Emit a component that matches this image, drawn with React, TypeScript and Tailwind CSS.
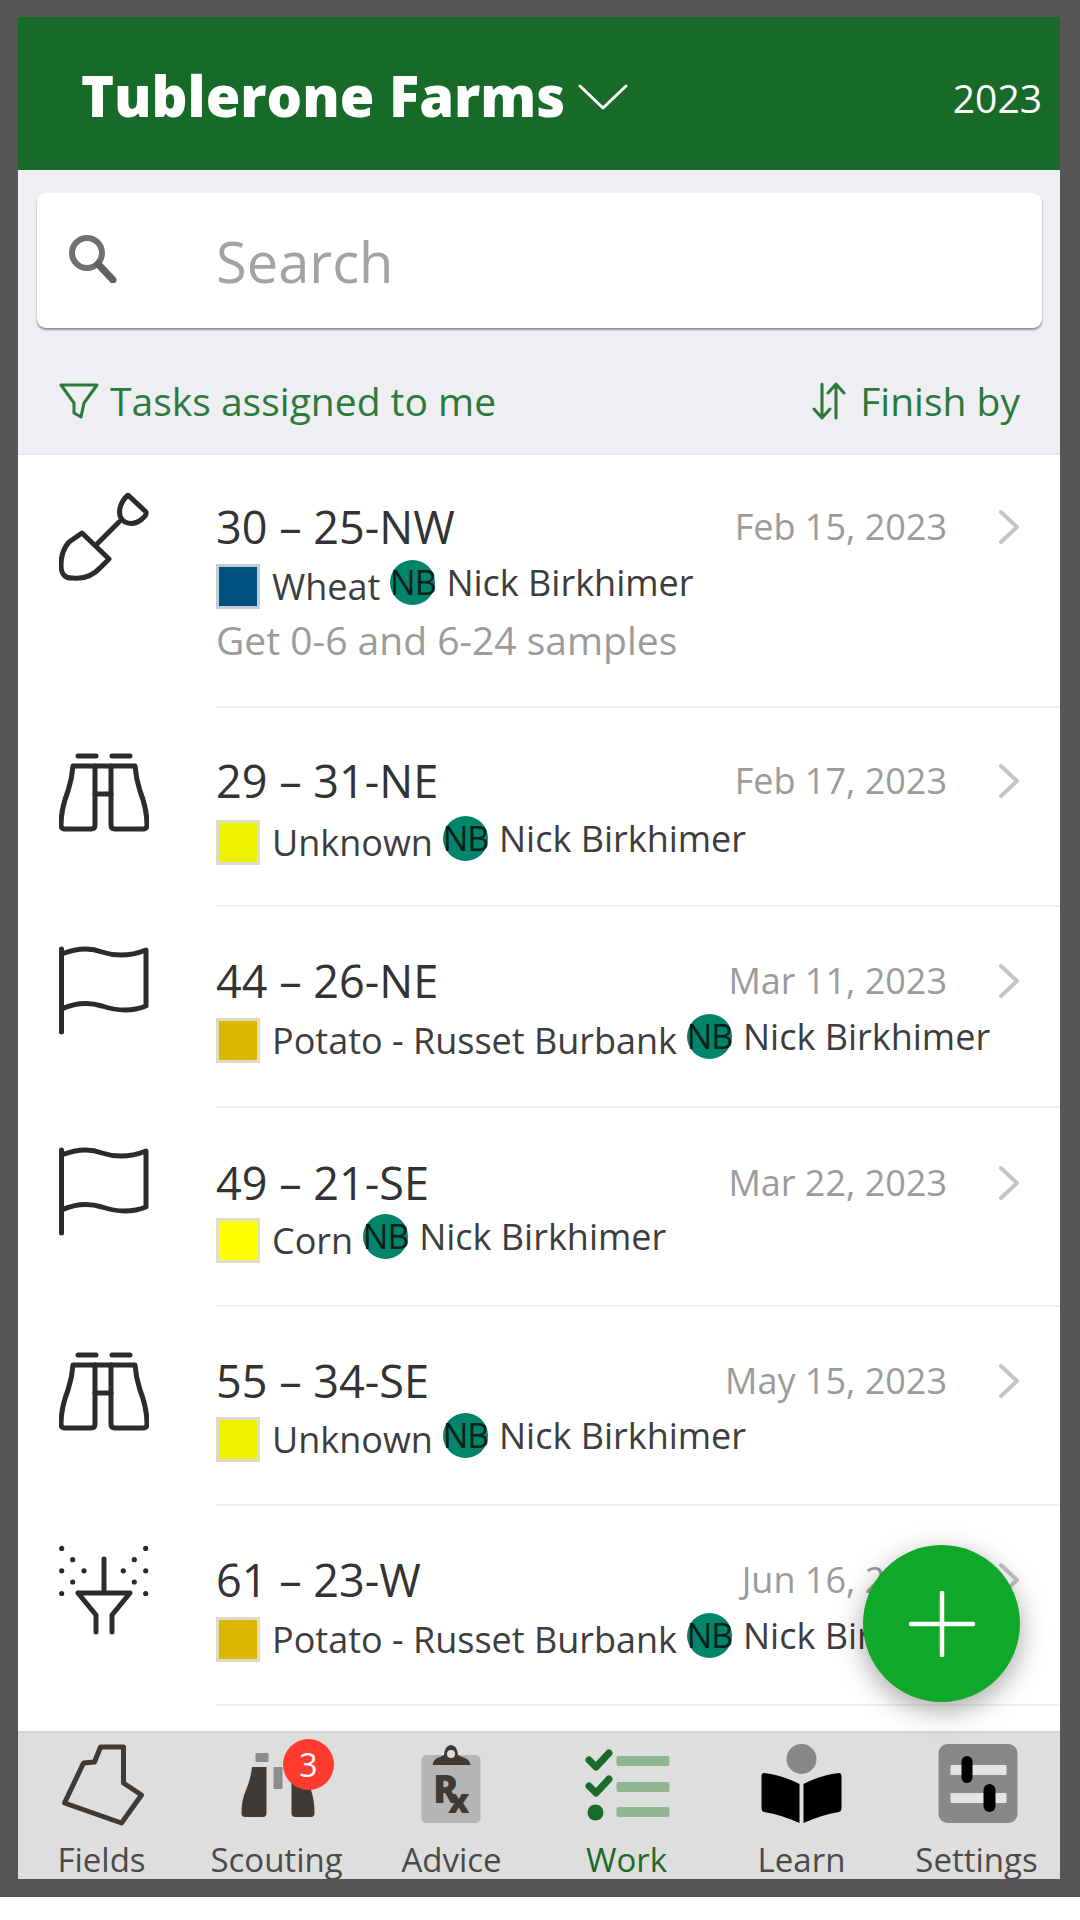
const FONT = "font-['Open_Sans',sans-serif]";

function Shovel() {
  return (
    <svg viewBox="0 0 90 90" className="w-[90px] h-[90px]" fill="none" stroke="#2b2b2b" strokeWidth="5" strokeLinecap="round" strokeLinejoin="round">
      <path d="M69 2 L87 19 Q88 22 83 26 Q75 33 66 29 Q59 25 61 15 Q63 7 69 2 Z" />
      <path d="M60 29 L37 52" />
      <path d="M23 40 L50 66 L42 74 Q30 87 14 85 Q2 86 2 72 Q2 58 10 49 Z" />
    </svg>
  );
}
function Binoculars() {
  return (
    <svg viewBox="0 0 90 80" className="w-[90px] h-[80px]" fill="none" stroke="#2b2b2b" strokeWidth="5" strokeLinecap="round" strokeLinejoin="round">
      <path d="M19 3 H37 M53 3 H71" />
      <path d="M14 13 H36 V72 Q36 76 32 76 H6 Q2 76 2 72 Q2 56 9 38 Q13 26 14 13 Z" />
      <path d="M76 13 H52 V72 Q52 76 56 76 H84 Q88 76 88 72 Q88 56 81 38 Q77 26 76 13 Z" />
      <path d="M36 13 H52 M36 41 H52" />
    </svg>
  );
}
function Flag() {
  return (
    <svg viewBox="0 0 90 90" className="w-[90px] h-[90px]" fill="none" stroke="#2b2b2b" strokeWidth="5" strokeLinecap="round" strokeLinejoin="round">
      <path d="M2.5 3 V86" />
      <path d="M2.5 8 C18 2 30 1 43 6 C58 11 72 10 87 4 V60 C72 66 58 65 43 60 C30 56 18 56 2.5 63" />
    </svg>
  );
}
function Sprayer() {
  const pts = [[2.7,3.4],[13.7,14.7],[2.7,25.8],[25,25.8],[13.7,37],[2.7,48.5],[86.7,3.4],[75.3,14.7],[86.7,25.8],[64.3,25.8],[75.3,37],[86.7,48.5]];
  return (
    <svg viewBox="0 0 90 90" className="w-[90px] h-[90px]" fill="none" stroke="#2b2b2b" strokeWidth="5" strokeLinecap="round" strokeLinejoin="round">
      {pts.map((p, i) => <circle key={i} cx={p[0]} cy={p[1]} r="1.8" strokeWidth="1.6" fill="#2b2b2b" />)}
      <path d="M45 14 V47" />
      <path d="M19 48 H71 L53 70 V87 M37 87 V70 L19 48" />
    </svg>
  );
}

type Row = { h: number; pt: number; gap: number; icon: JSX.Element; iconTop: number; title: string; date: string; color: string; edge: string; crop: string; note?: string };

const rows: Row[] = [
  { h: 253, pt: 47, gap: 12, icon: <Shovel />, iconTop: 38, title: "30 – 25-NW", date: "Feb 15, 2023", color: "#00507f", edge: "#bfcfda", crop: "Wheat", note: "Get 0-6 and 6-24 samples" },
  { h: 199, pt: 48, gap: 14, icon: <Binoculars />, iconTop: 45, title: "29 – 31-NE", date: "Feb 17, 2023", color: "#eef200", edge: "#dcdcc8", crop: "Unknown" },
  { h: 201, pt: 49, gap: 12, icon: <Flag />, iconTop: 39, title: "44 – 26-NE", date: "Mar 11, 2023", color: "#dcb600", edge: "#e0dcc4", crop: "Potato - Russet Burbank" },
  { h: 199, pt: 50, gap: 10, icon: <Flag />, iconTop: 39, title: "49 – 21-SE", date: "Mar 22, 2023", color: "#ffff00", edge: "#e0e0c8", crop: "Corn" },
  { h: 199, pt: 49, gap: 11, icon: <Binoculars />, iconTop: 45, title: "55 – 34-SE", date: "May 15, 2023", color: "#eef200", edge: "#dcdcc8", crop: "Unknown" },
  { h: 200, pt: 49, gap: 12, icon: <Sprayer />, iconTop: 39, title: "61 – 23-W", date: "Jun 16, 2023", color: "#dcb600", edge: "#e0dcc4", crop: "Potato - Russet Burbank" },
];

function TaskRow({ r }: { r: Row }) {
  return (
    <div className="flex shrink-0" style={{ height: r.h }}>
      <div className="w-[198px] shrink-0 pl-[41px]" style={{ paddingTop: r.iconTop }}>{r.icon}</div>
      <div className="flex-1 min-w-0 border-b-2 border-[#f0f0f0] pr-[40px]" style={{ paddingTop: r.pt }}>
        <div className="flex items-center justify-between h-[50px]">
          <span className="text-[45px] leading-[50px] text-[#333333]">{r.title}</span>
          <div className="flex items-center">
            <span className="text-[36px] text-[#9b9b9b] whitespace-nowrap">{r.date}</span>
            <svg viewBox="0 0 22 36" className="w-[22px] h-[36px] ml-[51px]" fill="none" stroke="#c4c4c4" strokeWidth="4" strokeLinecap="round" strokeLinejoin="round">
              <path d="M3 3 L19 18 L3 33" />
            </svg>
          </div>
        </div>
        <div className="flex items-start whitespace-nowrap" style={{ marginTop: r.gap }}>
          <div className="w-[44px] h-[45px] border-[3px] shrink-0" style={{ backgroundColor: r.color, borderColor: r.edge }} />
          <span className="text-[36px] leading-[46px] text-[#3d3d3d] ml-[12px]">{r.crop}</span>
          <div className="w-[45px] h-[45px] rounded-full bg-[#00856a] shrink-0 ml-[10px] -mt-[4px] flex items-center justify-center text-[34px] tracking-[-1px] leading-[45px] text-[#0a1f1a]">NB</div>
          <span className="text-[36px] leading-[38px] text-[#3d3d3d] ml-[11px]">Nick Birkhimer</span>
        </div>
        {r.note && <div className="text-[39px] leading-[46px] text-[#9b9b9b] mt-[7px]">{r.note}</div>}
      </div>
    </div>
  );
}

function TabIcon({ children }: { children: React.ReactNode }) {
  return <svg viewBox="0 0 100 86" className="w-[100px] h-[86px]">{children}</svg>;
}

const tabs = [
  { label: "Fields", color: "#4a4a4a", icon: <polygon points="48.5,7 71.5,7 71.5,43 89.5,55 69.5,83 12.5,63 31.5,23 42.5,22" fill="#dedede" stroke="#3f3a35" strokeWidth="5" strokeLinejoin="round" /> },
  { label: "Scouting", color: "#4a4a4a", icon: (
    <g>
      <rect x="28.5" y="13" width="13" height="9" rx="1" fill="#8c8c8c" />
      <rect x="46.5" y="27" width="9" height="22" fill="#8c8c8c" />
      <path d="M25 27 H39.5 V73 Q39.5 77 36 77 H18 Q14.5 77 14.5 73 Q14.5 60 19 50 Q24 38 25 27 Z" fill="#3f3a35" />
      <path d="M64.5 27 H77 Q79 38 84 50 Q87.5 60 87.5 73 Q87.5 77 84 77 H68 Q64.5 77 64.5 73 Z" fill="#3f3a35" />
    </g>
  ) },
  { label: "Advice", color: "#4a4a4a", icon: (
    <g>
      <rect x="19.5" y="15" width="59" height="68" rx="5" fill="#b5b5b5" />
      <path d="M30.5 25 Q31 19 38 17 L42 15 Q43 5 49 5 Q55 5 56 15 L60 17 Q68 19 68.5 25 Z" fill="#3f3a35" />
      <circle cx="49" cy="14" r="4" fill="#dedede" />
      <text x="31" y="63" fontSize="38" fontWeight="800" fill="#3f3a35" fontFamily="Open Sans, sans-serif">R</text>
      <text x="46" y="73" fontSize="34" fontWeight="800" fill="#3f3a35" fontFamily="Open Sans, sans-serif">x</text>
    </g>
  ) },
  { label: "Work", color: "#1a6b2a", icon: (
    <g>
      <path d="M12 20 L19 27 L32 13 M12 46 L19 53 L32 39" fill="none" stroke="#1a6b2a" strokeWidth="7" strokeLinecap="round" strokeLinejoin="round" />
      <circle cx="18.5" cy="72.5" r="8" fill="#1a6b2a" />
      <rect x="39.5" y="16" width="53" height="10" rx="2" fill="#8fb592" />
      <rect x="39.5" y="42" width="53" height="10" rx="2" fill="#8fb592" />
      <rect x="39.5" y="67" width="53" height="10" rx="2" fill="#8fb592" />
    </g>
  ) },
  { label: "Learn", color: "#4a4a4a", icon: (
    <g>
      <circle cx="49.5" cy="19" r="15" fill="#888888" />
      <path d="M12 33 Q30 35 47.5 44 V83 Q30 75 12 72 Q9.500 71 9.500 68 V36 Q9.500 33 12 33 Z" fill="#000" />
      <path d="M87 33 Q69 35 51.500 44 V83 Q69 75 87 72 Q89.500 71 89.500 68 V36 Q89.500 33 87 33 Z" fill="#000" />
    </g>
  ) },
  { label: "Settings", color: "#4a4a4a", icon: (
    <g>
      <rect x="11.5" y="4" width="79" height="79" rx="9" fill="#888888" />
      <rect x="23.5" y="25" width="56" height="10" rx="1" fill="#e4e4e4" />
      <rect x="23.5" y="53" width="56" height="10" rx="1" fill="#e4e4e4" />
      <rect x="34.5" y="16" width="11" height="27" rx="5.500" fill="#000" />
      <rect x="56.5" y="44" width="12" height="28" rx="6" fill="#000" />
    </g>
  ) },
];

export default function App() {
  return (
    <div className={`w-[1080px] h-[1920px] bg-white ${FONT}`}>
      <div className="h-[1897px] bg-[#555555] pt-[17px] pl-[18px] pr-[20px]">
        <div className="relative h-[1862px] flex flex-col overflow-hidden bg-white">
          <header className="h-[153px] shrink-0 bg-[#176a27] flex items-center justify-between pl-[63px] pr-[18px] text-white">
            <div className="flex items-center">
              <span className="text-[56px] font-extrabold leading-none mt-[3px]">Tublerone Farms</span>
              <svg viewBox="0 0 50 26" className="w-[50px] h-[26px] ml-[13px] mt-[7px]" fill="none" stroke="#fff" strokeWidth="3" strokeLinecap="round" strokeLinejoin="round">
                <path d="M2 2 L25 24 L48 2" />
              </svg>
            </div>
            <span className="text-[39px] leading-none mt-[7px]">2023</span>
          </header>

          <div className="h-[285px] shrink-0 bg-[#eeeef3] border-b-2 border-[#e8e8ec] pt-[23px] pl-[19px] pr-[18px]">
            <div className="h-[135px] bg-white rounded-[9px] shadow-[0_2px_2px_rgba(80,80,90,0.6)] flex items-center pl-[30px]">
              <svg viewBox="0 0 50 50" className="w-[50px] h-[50px] -mt-[6px]" fill="none" strokeLinecap="round">
                <circle cx="20" cy="20" r="15" stroke="#707070" strokeWidth="6" />
                <path d="M31 31 L46 47" stroke="#606060" strokeWidth="7" />
              </svg>
              <span className="text-[56px] text-[#a3a3a3] ml-[99px]">Search</span>
            </div>
            <div className="flex items-center justify-between mt-[49px] pl-[22px] pr-[22px] text-[#2b7a3c]">
              <div className="flex items-center">
                <svg viewBox="0 0 40 36" className="w-[40px] h-[36px]" fill="none" stroke="#2b7a3c" strokeWidth="3" strokeLinejoin="round">
                  <path d="M2 2 H38 L25 20 L22 34 L15 30 L15 20 Z" />
                </svg>
                <span className="text-[39px] leading-[48px] ml-[11px]">Tasks assigned to me</span>
              </div>
              <div className="flex items-center">
                <svg viewBox="0 0 34 38" className="w-[34px] h-[38px]" fill="none" stroke="#2b7a3c" strokeWidth="3" strokeLinecap="round" strokeLinejoin="round">
                  <path d="M10 2 V35 M2 27 L10 36 L18 27" />
                  <path d="M24 36 V3 M16 11 L24 2 L32 11" />
                </svg>
                <span className="text-[39px] leading-[48px] ml-[14px]">Finish by</span>
              </div>
            </div>
          </div>

          <div className="flex-1 min-h-0 overflow-hidden flex flex-col">
            {rows.map((r) => <TaskRow key={r.title} r={r} />)}
          </div>

          <nav className="h-[148px] shrink-0 overflow-hidden bg-[#dedede] border-t-2 border-[#d4d4d4] pt-[7px]">
            <div className="grid grid-cols-[repeat(6,175px)] -ml-[4px]">
              {tabs.map((t) => (
                <div key={t.label} className="relative flex flex-col items-center">
                  <TabIcon>{t.icon}</TabIcon>
                  <span className="text-[33px] leading-[40px] mt-[14px] whitespace-nowrap" style={{ color: t.color }}>{t.label}</span>
                  {t.label === "Scouting" && (
                    <span className="absolute left-[94px] -top-[1px] w-[51px] h-[51px] rounded-full bg-[#ff3b30] text-white text-[32px] leading-[51px] text-center">3</span>
                  )}
                </div>
              ))}
            </div>
          </nav>

          <button className="absolute right-[40px] bottom-[177px] w-[157px] h-[157px] rounded-full bg-[#10a829] shadow-[0_8px_28px_rgba(0,0,0,0.35)] flex items-center justify-center">
            <svg viewBox="0 0 66 66" className="w-[66px] h-[66px]" stroke="#fff" strokeWidth="4.5" strokeLinecap="round">
              <path d="M33 2 V64 M2 33 H64" />
            </svg>
          </button>
        </div>
      </div>
    </div>
  );
}
